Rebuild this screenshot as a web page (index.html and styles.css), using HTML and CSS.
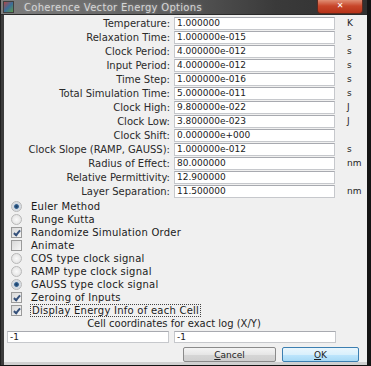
FILE: index.html
```html
<!DOCTYPE html>
<html>
<head>
  <meta charset="utf-8">
  <title>Coherence Vector Energy Options</title>
  <link rel="stylesheet" href="styles.css">
</head>
<body>
  <div class="window">
    <div class="titlebar">
      <span class="app-icon"></span>
      <span class="title">Coherence Vector Energy Options</span>
      <span class="close">&#x2715;</span>
    </div>

    <div class="client">
      <div class="params">
        <label>Temperature:</label><span class="field">1.000000</span><span class="unit">K</span>
        <label>Relaxation Time:</label><span class="field">1.000000e-015</span><span class="unit">s</span>
        <label>Clock Period:</label><span class="field">4.000000e-012</span><span class="unit">s</span>
        <label>Input Period:</label><span class="field">4.000000e-012</span><span class="unit">s</span>
        <label>Time Step:</label><span class="field">1.000000e-016</span><span class="unit">s</span>
        <label>Total Simulation Time:</label><span class="field">5.000000e-011</span><span class="unit">s</span>
        <label>Clock High:</label><span class="field">9.800000e-022</span><span class="unit">J</span>
        <label>Clock Low:</label><span class="field">3.800000e-023</span><span class="unit">J</span>
        <label>Clock Shift:</label><span class="field">0.000000e+000</span><span class="unit"></span>
        <label>Clock Slope (RAMP, GAUSS):</label><span class="field">1.000000e-012</span><span class="unit">s</span>
        <label>Radius of Effect:</label><span class="field">80.000000</span><span class="unit">nm</span>
        <label>Relative Permittivity:</label><span class="field">12.900000</span><span class="unit"></span>
        <label>Layer Separation:</label><span class="field">11.500000</span><span class="unit">nm</span>
      </div>

      <div class="options">
        <div class="opt"><span class="radio on"></span>Euler Method</div>
        <div class="opt"><span class="radio"></span>Runge Kutta</div>
        <div class="opt"><span class="check on"></span>Randomize Simulation Order</div>
        <div class="opt"><span class="check"></span>Animate</div>
        <div class="opt"><span class="radio"></span>COS type clock signal</div>
        <div class="opt"><span class="radio"></span>RAMP type clock signal</div>
        <div class="opt"><span class="radio on"></span>GAUSS type clock signal</div>
        <div class="opt"><span class="check on"></span>Zeroing of Inputs</div>
        <div class="opt"><span class="check on"></span><span class="focus">Display Energy Info of each Cell</span></div>
      </div>

      <div class="coords-label">Cell coordinates for exact log (X/Y)</div>
      <div class="coords">
        <span class="field">-1</span>
        <span class="field">-1</span>
      </div>

      <div class="buttons">
        <button class="btn cancel"><u>C</u>ancel</button>
        <button class="btn ok"><u>O</u>K</button>
      </div>
    </div>
  </div>
</body>
</html>
```

FILE: styles.css
```css
html, body { margin: 0; padding: 0; }
body {
  width: 371px;
  height: 366px;
  background: #141414;
  font-family: "DejaVu Sans", Verdana, sans-serif;
  font-size: 10px;
  color: #1e1e1e;
  overflow: hidden;
}

.window {
  width: 367px;
  height: 365px;
  display: flex;
  flex-direction: column;
  background: #3c3c3c;
  border-left: 1px solid #202020;
  box-sizing: border-box;
}

/* title bar */
.titlebar {
  height: 16px;
  display: flex;
  align-items: center;
  background: linear-gradient(90deg, #7e7e7e 0%, #5c5c5c 45%, #3a3a3a 75%, #303030 100%);
  border-bottom: 1px solid #2a2a2a;
}
.app-icon {
  width: 9px;
  height: 10px;
  margin-left: 2px;
  background: linear-gradient(135deg, #b04848 0%, #3a6e9a 50%, #5e9a4a 100%);
  border: 1px solid #404040;
}
.title {
  margin-left: 10px;
  color: #d6d6d6;
  font-size: 10px;
  letter-spacing: 0.3px;
  text-shadow: 0 0 3px #9a9a9a;
  flex: 1;
}
.close {
  width: 44px;
  height: 14px;
  margin-right: 4px;
  margin-top: -2px;
  background: linear-gradient(#e49a80, #c8462a 50%, #b63218);
  border: 1px solid #5a2a20;
  border-top: none;
  border-radius: 0 0 4px 4px;
  color: #fff;
  font-size: 8px;
  font-weight: bold;
  text-align: center;
  line-height: 13px;
}

/* client area */
.client {
  flex: 1;
  margin-left: 3px;
  background: #f0f0f0;
  border-bottom: 3px solid #d0d0d0;
  padding-top: 2px;
  display: flex;
  flex-direction: column;
}

.params {
  display: grid;
  grid-template-columns: 166px 161px 30px;
  column-gap: 4px;
  row-gap: 1px;
}
.params label {
  text-align: right;
  line-height: 13px;
  white-space: nowrap;
  color: #2a2a2a;
}
.params .unit {
  line-height: 13px;
  padding-left: 8px;
  font-size: 9px;
}

.field {
  height: 13px;
  box-sizing: border-box;
  background: #fff;
  border: 1px solid #c6c8cc;
  border-top-color: #a8aab0;
  padding-left: 2px;
  font-size: 9px;
  line-height: 11px;
  color: #222;
}

/* radio and check options */
.options {
  margin-top: 2px;
  padding-left: 7px;
}
.opt {
  height: 13px;
  display: flex;
  align-items: center;
  letter-spacing: 0.25px;
  color: #1a1a1a;
}
.radio, .check {
  width: 11px;
  height: 11px;
  margin-right: 9px;
  box-sizing: border-box;
}
.radio {
  border-radius: 50%;
  border: 1px solid #b8b8b8;
  background: radial-gradient(circle, #fafafa 0%, #dcdcdc 100%);
}
.radio.on {
  background: radial-gradient(circle, #1c3c62 0%, #2e5d8c 30%, #cfd7e0 45%, #e8e8e8 100%);
}
.check {
  border: 1px solid #9a9a9a;
  background: linear-gradient(135deg, #d8d8d8, #f6f6f6);
  position: relative;
}
.check.on::after {
  content: "";
  position: absolute;
  left: 3px;
  top: 1px;
  width: 2px;
  height: 5px;
  border: solid #35507a;
  border-width: 0 2px 2px 0;
  transform: rotate(40deg);
}
.focus {
  outline: 1px dotted #444;
  padding: 0 1px;
}

.coords-label {
  margin-top: 1px;
  text-align: center;
  width: 340px;
  line-height: 12px;
}
.coords {
  display: flex;
  gap: 5px;
  padding-left: 3px;
  margin-top: 1px;
}
.coords .field {
  width: 162px;
  height: 12px;
}

.buttons {
  display: flex;
  justify-content: flex-end;
  gap: 6px;
  padding-right: 8px;
  margin-top: 4px;
}
.btn {
  height: 15px;
  padding: 0;
  font-family: inherit;
  font-size: 9px;
  color: #1e1e1e;
  background: linear-gradient(#f4f4f4 0%, #e6e6e6 50%, #d6d6d6 51%, #cfcfcf 100%);
  border: 1px solid #8a8a8a;
  border-radius: 2px;
}
.cancel { width: 93px; }
.ok {
  width: 77px;
  border-color: #3c7fb1;
  background: linear-gradient(#eaf6fd 0%, #d9f0fc 50%, #bee6fd 51%, #a7d9f5 100%);
}
```
